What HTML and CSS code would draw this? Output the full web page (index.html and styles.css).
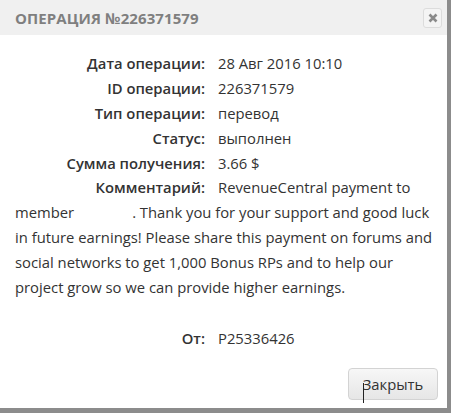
FILE: index.html
```html
<!DOCTYPE html>
<html lang="ru">
  <head>
    <meta charset="UTF-8" />
    <title>Операция</title>
    <link rel="stylesheet" href="styles.css">
  </head>
  <body>
    <div class="dialog">
      <div class="head">
        <span class="head-title">Операция №226371579</span>
        <button class="head-close" type="button">
          <svg width="10" height="10" viewBox="0 0 10 10"><path d="M1.5 1.5 L8.5 8.5 M8.5 1.5 L1.5 8.5" stroke="#8a8a8a" stroke-width="2.6" stroke-linecap="butt"/></svg>
        </button>
      </div>

      <div class="content">
        <div class="row"><span class="lbl">Дата операции:</span><span class="val">28 Авг 2016 10:10</span></div>
        <div class="row"><span class="lbl">ID операции:</span><span class="val">226371579</span></div>
        <div class="row"><span class="lbl">Тип операции:</span><span class="val">перевод</span></div>
        <div class="row"><span class="lbl">Статус:</span><span class="val">выполнен</span></div>
        <div class="row"><span class="lbl">Сумма получения:</span><span class="val">3.66 $</span></div>
        <p class="comment"><span class="lbl">Комментарий:</span>RevenueCentral payment to member<span class="blank"></span>. Thank you for your support and good luck in future earnings! Please share this payment on forums and social networks to get 1,000 Bonus RPs and to help our project grow so we can provide higher earnings.</p>
        <div class="row from"><span class="lbl">От:</span><span class="val">P25336426</span></div>
      </div>

      <div class="foot">
        <button class="btn-close" type="button">Закрыть</button>
        <span class="cursor"></span>
      </div>
    </div>
  </body>
</html>
```

FILE: styles.css
```css
body {
  margin: 0;
  background: #8c8c8c;
  font-family: "Open Sans", "Liberation Sans", sans-serif;
  color: #333;
}
.dialog {
  width: 447px;
  height: 408px;
  background: #fff;
  display: flex;
  flex-direction: column;
}
.head {
  height: 35px;
  background: #f0f0f0;
  display: flex;
  align-items: center;
  justify-content: space-between;
  padding: 0 5px 0 15px;
}
.head-title {
  text-transform: uppercase;
  font-weight: bold;
  font-size: 15px;
  letter-spacing: 0.1px;
  color: #7f7f7f;
}
.head-close {
  width: 19px;
  height: 20px;
  padding: 0;
  border: 1px solid #dcdcdc;
  border-radius: 3px;
  background: #f4f4f4;
  display: flex;
  align-items: center;
  justify-content: center;
}
.content {
  padding: 15px 10px 0 15px;
  font-size: 14.8px;
}
.row {
  display: flex;
  height: 25px;
  align-items: center;
}
.lbl {
  display: inline-block;
  width: 190px;
  text-align: right;
  margin-right: 13px;
  font-weight: 600;
}
.comment {
  margin: 0;
  line-height: 25px;
}
.comment .lbl {
  line-height: 20px;
}
.blank {
  display: inline-block;
  width: 58px;
}
.from {
  margin-top: 25px;
}
.foot {
  flex: 1;
  display: flex;
  justify-content: flex-end;
  align-items: flex-end;
  padding: 0 9px 8px 0;
  position: relative;
}
.btn-close {
  width: 90px;
  height: 32px;
  border: 1px solid #d3d3d3;
  border-radius: 4px;
  background: linear-gradient(#f7f7f7, #e6e6e6);
  font-family: "Open Sans", "Liberation Sans", sans-serif;
  font-size: 14.8px;
  color: #333;
}
.cursor {
  position: absolute;
  left: 363px;
  bottom: 5px;
  width: 1px;
  height: 20px;
  background: #222;
}
```
